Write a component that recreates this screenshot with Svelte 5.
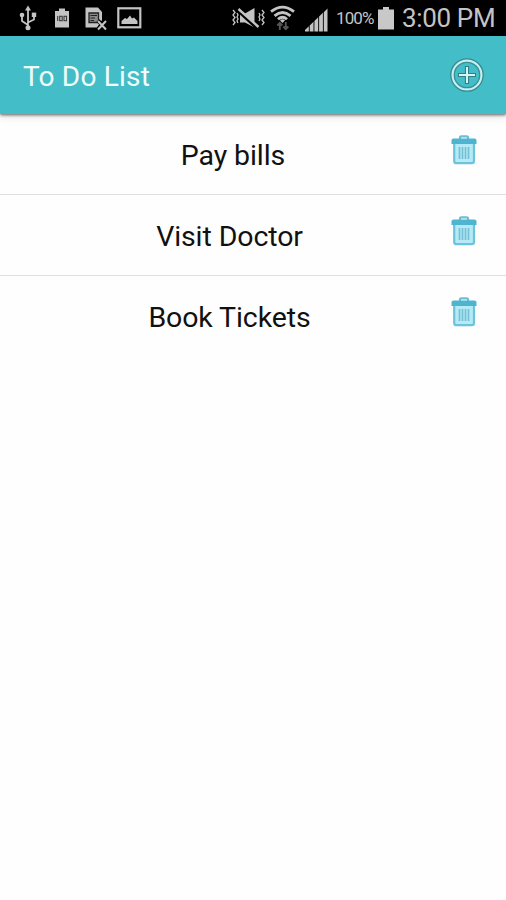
<script lang="ts">
  interface Task {
    id: number;
    title: string;
  }

  let tasks = $state<Task[]>([
    { id: 1, title: " Pay bills" },
    { id: 2, title: "Visit Doctor" },
    { id: 3, title: "Book Tickets" },
  ]);

  function removeTask(id: number) {
    tasks = tasks.filter((task) => task.id !== id);
  }

  function addTask() {
    tasks.push({ id: Date.now(), title: "New task" });
  }
</script>

<div class="screen">
  <div class="status-bar">
    <div class="notifications">
      <svg class="usb" width="18" height="26" viewBox="0 0 18 26">
        <g fill="none" stroke="#c4c4c4" stroke-width="1.8">
          <path d="M9 4V23M9 20L3 16V11M9 17.5L15 14.5V10" />
        </g>
        <g fill="#c4c4c4">
          <path d="M9 0.5L12 5.5H6Z" />
          <circle cx="9" cy="22.8" r="2.5" />
          <circle cx="3" cy="10" r="2.3" />
          <rect x="12.8" y="7.6" width="4.4" height="4.4" />
        </g>
      </svg>
      <svg class="level" width="14" height="20" viewBox="0 0 14 20">
        <path d="M0 3H4V0.5H10V3H14V19.5H0Z" fill="#c4c4c4" />
        <g fill="none" stroke="#3a3a3a" stroke-width="1.1">
          <path d="M2.7 8V13" />
          <rect x="4.7" y="8.3" width="2.5" height="4.4" />
          <rect x="9" y="8.3" width="2.5" height="4.4" />
        </g>
      </svg>
      <svg class="card" width="23" height="25" viewBox="0 0 23 25">
        <path d="M0.5 1.5H13L17 6V14L12 21.5H0.5Z" fill="#c4c4c4" />
        <path d="M4 7H13.5V16.5H4Z" fill="#8b8b8b" stroke="#222" stroke-width="1.3" />
        <path d="M5.5 9.5H12M5.5 12H10M5.5 14.5H9" stroke="#222" stroke-width="1.2" />
        <path d="M13 14.5L21 23.5M21 14.5L13 23.5" stroke="#000" stroke-width="4" />
        <path d="M13 15L21 23.5M21 15L13 23.5" stroke="#c4c4c4" stroke-width="2" />
      </svg>
      <svg class="photo" width="25" height="22" viewBox="0 0 25 22">
        <rect x="1.3" y="1.3" width="22" height="19" fill="none" stroke="#c4c4c4" stroke-width="2.2" />
        <path d="M4.5 17V14L8 11L10 12L13 8.5L15 11.5L17 10.5L20.5 14V17Z" fill="#c4c4c4" />
      </svg>
    </div>
    <div class="indicators">
      <svg class="mute" width="34" height="22" viewBox="0 0 34 22">
        <path d="M8 6.5H13L22.5 1V20.5L13 15.5H8Z" fill="#c4c4c4" />
        <path d="M6 3.5L25 21" stroke="#000" stroke-width="3.4" />
        <path d="M6.5 2L26.5 20" stroke="#c4c4c4" stroke-width="2.4" />
        <g fill="none" stroke="#c4c4c4" stroke-width="1.3">
          <path d="M1 3L3 5.5L1 8L3 10.5L1 13L3 15.5L1 18" />
          <path d="M5 6L6 8L5 10L6 12L5 14L6 16" />
          <path d="M30 3L32 5.5L30 8L32 10.5L30 13L32 15.5L30 18" />
          <path d="M27 6L28 8L27 10L28 12L27 14" />
        </g>
      </svg>
      <svg class="wifi" width="25" height="26" viewBox="0 0 25 26">
        <g fill="none" stroke="#c4c4c4" stroke-width="2.8">
          <path d="M1 6.7Q12.5 -2.5 24 6.7" />
          <path d="M4.5 10.8Q12.5 4.2 20.5 10.8" />
          <path d="M8 14.3Q12.5 10.3 17 14.3" />
        </g>
        <path d="M10 15.2Q12.5 13.4 15 15.2L12.5 18Z" fill="#c4c4c4" />
        <path d="M9.8 25V18M7.3 20.5L9.8 17.8L12.3 20.5M15.8 17V24M13.3 21.5L15.8 24.2L18.3 21.5" fill="none" stroke="#555" stroke-width="1.9" />
      </svg>
      <svg class="signal" width="23" height="24" viewBox="0 0 23 24">
        <path d="M0 23.5V22L3.8 18.3V23.5ZM4.7 23.5V17.5L8.5 13.8V23.5ZM9.4 23.5V13L13.2 9.2V23.5ZM14.1 23.5V8.6L17.9 4.8V23.5ZM18.8 23.5V4.2L22.5 0.5V23.5Z" fill="#c4c4c4" />
      </svg>
      <span class="percent">100%</span>
      <svg class="battery" width="16" height="23" viewBox="0 0 16 23">
        <path d="M0 2.5H5V0H11V2.5H16V22.5H0Z" fill="#c8c8c8" />
      </svg>
      <span class="clock">3:00 PM</span>
    </div>
  </div>

  <header class="app-bar">
    <h1 class="title">To Do List</h1>
    <button class="add" aria-label="Add task" onclick={addTask}>
      <svg width="36" height="36" viewBox="0 0 36 36" fill="none">
        <circle cx="18" cy="18" r="14.5" stroke="#c5eeef" stroke-width="3" />
        <circle cx="18" cy="18" r="16.2" stroke="#388b92" stroke-width="1.3" />
        <circle cx="18" cy="18" r="12.7" stroke="#398f96" stroke-width="1.3" />
        <path d="M18 9V27M9 18H27" stroke="#347f86" stroke-width="4.2" />
        <path d="M18 10V26M10 18H26" stroke="#d5f6f6" stroke-width="2" />
      </svg>
    </button>
  </header>

  <ul class="task-list">
    {#each tasks as task (task.id)}
      <li class="task">
        <span class="task-title">{task.title}</span>
        <button class="delete" aria-label="Delete {task.title}" onclick={() => removeTask(task.id)}>
          <svg width="26" height="30" viewBox="0 0 26 30">
            <path d="M9 4V2.6Q9 1.4 10.5 1.4H15.5Q17 1.4 17 2.6V4" fill="none" stroke="#6bbfd6" stroke-width="2.2" />
            <path d="M3.2 8H23V26Q23 28.2 20.8 28.2H5.4Q3.2 28.2 3.2 26Z" fill="#b4ebf7" stroke="#6cc3da" stroke-width="2.2" />
            <path d="M2.5 3.5H23.5Q25.5 3.5 25.5 5.5V9H0.5V5.5Q0.5 3.5 2.5 3.5Z" fill="#4fb4d0" />
            <path d="M8.5 12V24M11.5 12V24M14.5 12V24M17.5 12V24" stroke="#77c0d3" stroke-width="1.7" />
          </svg>
        </button>
      </li>
    {/each}
  </ul>
</div>

<style>
  :global(body) {
    margin: 0;
    background: #fff;
  }

  .screen {
    min-height: 900px;
    font-family: Roboto, "Liberation Sans", sans-serif;
    background: #fefefe;
  }

  .status-bar {
    display: flex;
    justify-content: space-between;
    align-items: center;
    box-sizing: border-box;
    height: 36px;
    padding: 0 11px 0 19px;
    background: #000;
    color: #c4c4c4;
  }

  .notifications,
  .indicators {
    display: flex;
    align-items: center;
  }

  .level {
    margin-left: 18px;
  }

  .card {
    margin-left: 16px;
  }

  .photo {
    margin-left: 9px;
  }

  .wifi {
    margin-left: 4px;
  }

  .signal {
    margin: 3px 0 0 10px;
  }

  .percent {
    margin-left: 8px;
    width: 42px;
    font-size: 17px;
    letter-spacing: -0.9px;
    line-height: 36px;
    white-space: nowrap;
  }

  .clock {
    margin-left: 8px;
    width: 93px;
    font-size: 26px;
    letter-spacing: -0.35px;
    line-height: 36px;
    white-space: nowrap;
  }

  .app-bar {
    position: relative;
    display: flex;
    justify-content: space-between;
    align-items: center;
    box-sizing: border-box;
    height: 78px;
    padding: 0 21px 0 23px;
    background: #43bec8;
    box-shadow: 0 1px 3px rgba(0, 0, 0, 0.6), 0 4px 8px rgba(0, 0, 0, 0.08);
  }

  .title {
    margin: 0;
    padding-top: 3px;
    font-size: 28px;
    font-weight: 400;
    letter-spacing: 0.2px;
    line-height: 40px;
    color: #effdfd;
  }

  button {
    display: flex;
    padding: 0;
    border: 0;
    background: none;
    cursor: pointer;
  }

  .task-list {
    margin: 0;
    padding: 0;
    list-style: none;
  }

  .task {
    display: flex;
    align-items: center;
    box-sizing: border-box;
    height: 81px;
    padding: 3px 29px 0 22px;
    border-bottom: 1px solid #dfdfdf;
  }

  .task:last-child {
    border-bottom-color: transparent;
  }

  .task-title {
    flex: 1;
    font-size: 28.5px;
    letter-spacing: -0.1px;
    line-height: 40px;
    text-align: center;
    white-space: pre;
    color: #111;
  }

  .delete {
    margin: 0 0 12px 14px;
  }
</style>
